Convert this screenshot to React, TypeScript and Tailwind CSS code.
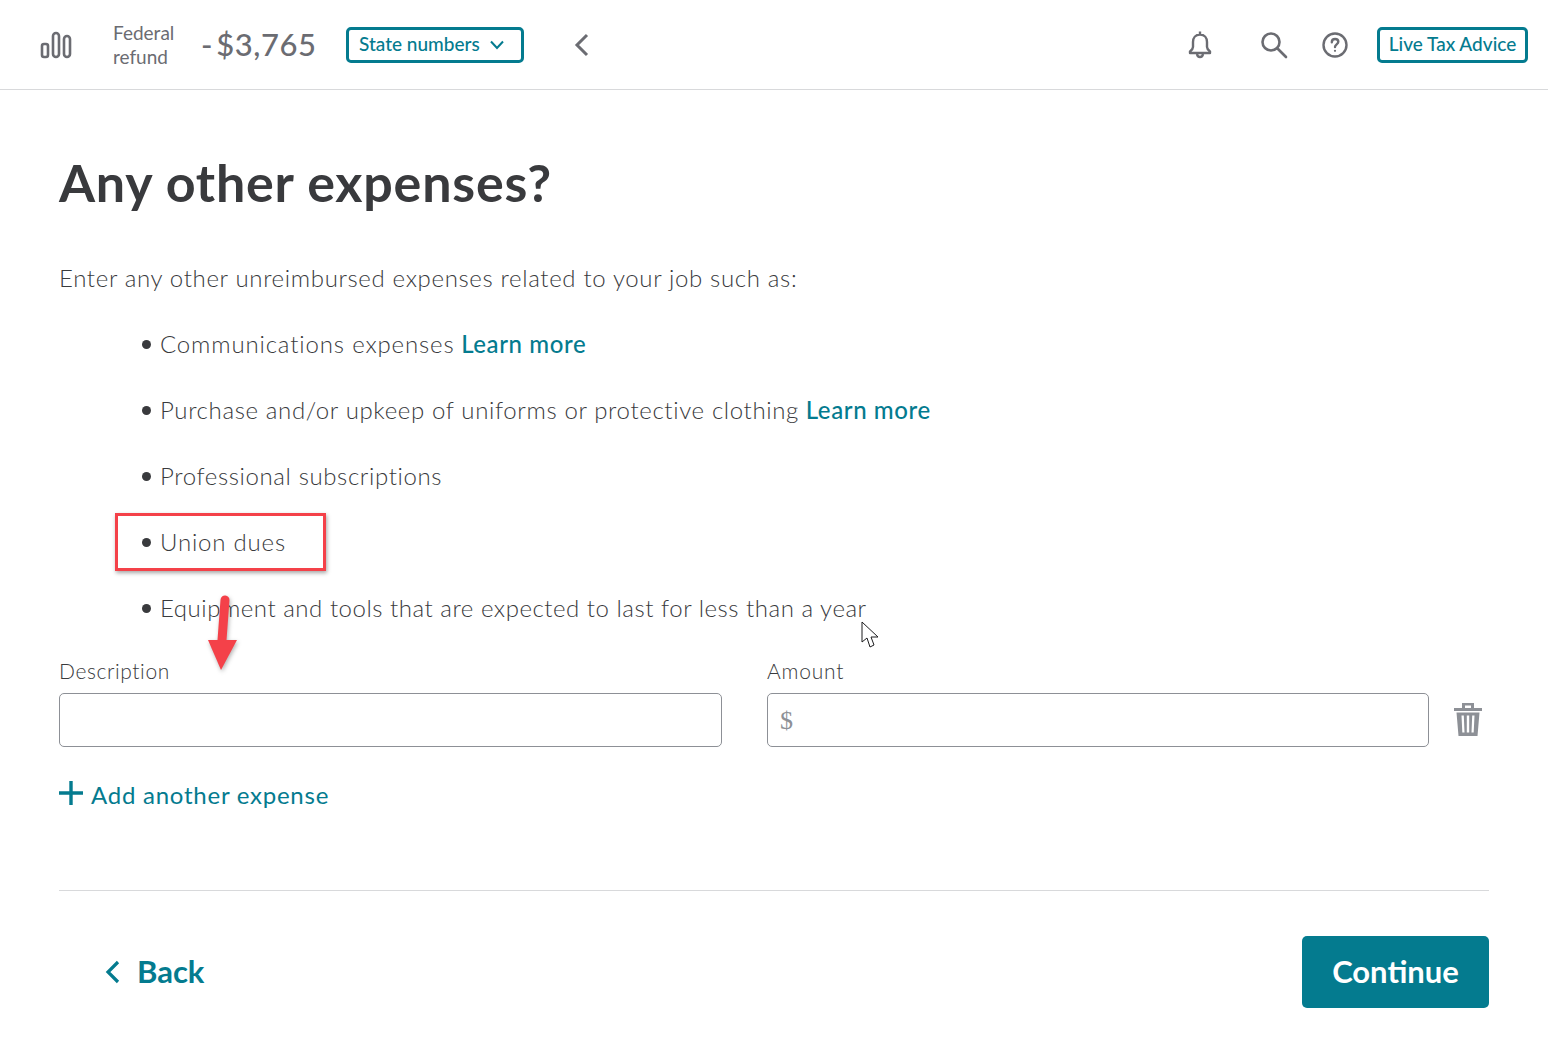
const font = { fontFamily: '"Lato", "Noto Sans", sans-serif' };

function Bullet({ children, tracking }: { children: React.ReactNode; tracking: string }) {
  return (
    <li className={`flex items-center h-[66px] text-[24px] font-light text-[#393a3d] ${tracking}`}>
      <span className="w-[9px] h-[9px] rounded-full bg-[#393a3d] mr-[9px] ml-[1px]" />
      <span>{children}</span>
    </li>
  );
}

function More() {
  return <span className="text-[#047b8f] font-medium tracking-[0.6px]"> Learn more</span>;
}

export default function App() {
  return (
    <div className="w-[1548px] h-[1045px] bg-white relative overflow-hidden" style={font}>
      <header className="h-[90px] border-b border-[#d8d9db] flex items-center">
        <svg width="32" height="28" viewBox="0 0 32 28" className="ml-[40px]" fill="none" stroke="#6b6c72" strokeWidth="2.6">
          <rect x="2" y="13" width="6" height="13" rx="2" />
          <rect x="13" y="2" width="6" height="24" rx="3" />
          <rect x="24" y="5" width="6" height="21" rx="3" />
        </svg>
        <div className="ml-[41px] w-[70px] text-[19px] leading-[24px] text-[#6b6c72]">
          <div>Federal</div>
          <div>refund</div>
        </div>
        <div className="ml-[18px] text-[31px] font-medium tracking-[0.5px] [word-spacing:-5px] text-[#6b6c72] w-[145px] whitespace-nowrap">- $3,765</div>
        <div className="w-[178px] h-[36px] border-[3px] border-[#047b8f] rounded-[5px] flex items-center pl-[10px] text-[19px] font-medium text-[#047b8f] whitespace-nowrap">
          State numbers
          <svg width="16" height="10" viewBox="0 0 16 10" className="ml-[9px]" fill="none" stroke="#047b8f" strokeWidth="2">
            <path d="M2 1.500 8 8l6-6.500" />
          </svg>
        </div>
        <svg width="16" height="24" viewBox="0 0 16 24" className="ml-[50px]" fill="none" stroke="#6b6c72" strokeWidth="3">
          <path d="M13 2 3 12l10 10" />
        </svg>
        <div className="flex-1" />
        <svg width="26" height="30" viewBox="0 0 26 30" className="mr-[47px]" fill="none" stroke="#6b6c72" strokeWidth="2.400" strokeLinejoin="round">
          <path d="M13 1.500v3M13 4.500c-4.500 0-7 3.300-7 7.500v5c0 2-1.600 3.300-3 4.500v1.500h20v-1.500c-1.400-1.200-3-2.500-3-4.500v-5c0-4.200-2.500-7.500-7-7.500Z" />
          <path d="M10 24c.3 2 1.400 3 3 3s2.700-1 3-3" />
        </svg>
        <svg width="28" height="28" viewBox="0 0 28 28" className="mr-[34px]" fill="none" stroke="#6b6c72" strokeWidth="2.600" strokeLinecap="round">
          <circle cx="11" cy="11" r="8.500" />
          <path d="m17.500 17.500 8.500 8.500" />
        </svg>
        <svg width="26" height="26" viewBox="0 0 26 26" className="mr-[29px]" fill="none" stroke="#6b6c72" strokeWidth="2.400">
          <circle cx="13" cy="13" r="11.500" />
          <path d="M9.800 10.200c0-2 1.400-3.200 3.300-3.200s3.200 1.100 3.200 2.800c0 2.600-3.300 2.600-3.300 5.200" strokeLinecap="round" />
          <circle cx="13" cy="18.800" r="1.100" fill="#6b6c72" stroke="none" />
        </svg>
        <div className="w-[151px] h-[36px] mr-[20px] border-[3px] border-[#047b8f] rounded-[5px] flex items-center justify-center text-[19px] font-medium text-[#047b8f] whitespace-nowrap">
          Live Tax Advice
        </div>
      </header>

      <main className="pl-[59px] pr-[59px]">
        <h1 className="mt-[58px] text-[52px] leading-[68px] font-bold text-[#393a3d] tracking-[0.8px]">Any other expenses?</h1>
        <p className="mt-[45px] text-[24px] leading-[34px] font-light tracking-[0.66px] text-[#393a3d]">
          Enter any other unreimbursed expenses related to your job such as:
        </p>
        <ul className="mt-[16px] pl-[82px]">
          <Bullet tracking="tracking-[0.85px]">Communications expenses<More /></Bullet>
          <Bullet tracking="tracking-[0.64px]">Purchase and/or upkeep of uniforms or protective clothing<More /></Bullet>
          <Bullet tracking="tracking-[0.62px]">Professional subscriptions</Bullet>
          <Bullet tracking="tracking-[0.8px]">Union dues</Bullet>
          <Bullet tracking="tracking-[0.53px]">Equipment and tools that are expected to last for less than a year</Bullet>
        </ul>

        <div className="flex mt-[17px]">
          <div className="w-[663px]">
            <label className="block text-[21px] leading-[26px] font-light tracking-[0.6px] text-[#393a3d]">Description</label>
            <div className="mt-[9px] h-[54px] border border-[#8d9096] rounded-[5px]" />
          </div>
          <div className="w-[662px] ml-[45px]">
            <label className="block text-[21px] leading-[26px] font-light tracking-[0.8px] text-[#393a3d]">Amount</label>
            <div className="mt-[9px] h-[54px] border border-[#8d9096] rounded-[5px] flex items-center pl-[12px] text-[26px] text-[#8d9096]" style={{ fontFamily: '"Liberation Serif", serif' }}>$</div>
          </div>
          <div className="flex items-center mt-[35px] ml-[25px] h-[54px]">
            <svg width="30" height="34" viewBox="0 0 30 34" fill="#8d9096" className="-ml-[1px] -mt-[1px]">
              <path fillRule="evenodd" d="M9 0h12v5h8v3H1V5h8V0Zm3 2.500V5h6V2.500h-6Z" />
              <path fillRule="evenodd" d="M3.500 9.500h23L24.500 33h-19L3.500 9.500Zm5 3 .8 17h2.200l-.7-17H8.500Zm5.300 0v17h2.400v-17h-2.400Zm5.400 0-.7 17h2.200l.8-17h-2.300Z" />
            </svg>
          </div>
        </div>

        <div className="flex items-center mt-[30px] text-[24px] text-[#047b8f] tracking-[0.75px]">
          <svg width="24" height="24" viewBox="0 0 24 24" stroke="#047b8f" strokeWidth="3.400" className="mr-[8px] -mt-[4px]">
            <path d="M12 0v24M0 12h24" />
          </svg>
          Add another expense
        </div>

        <div className="mt-[77px] border-t border-[#d8d9db]" />

        <div className="mt-[45px] flex items-center justify-between">
          <div className="flex items-center pl-[46px] text-[31px] font-bold text-[#047b8f]">
            <svg width="16" height="24" viewBox="0 0 16 24" fill="none" stroke="#047b8f" strokeWidth="3.200" className="mr-[16px]">
              <path d="M13 2 3 12l10 10" />
            </svg>
            <span className="-mt-[2px]">Back</span>
          </div>
          <div className="w-[187px] h-[72px] bg-[#047b8f] rounded-[5px] flex items-center justify-center pb-[2px] text-[31px] font-bold text-white">
            Continue
          </div>
        </div>
      </main>

      {/* annotations drawn over the page */}
      <div className="absolute left-[115px] top-[513px] w-[211px] h-[58px] border-[3px] border-[#f44149] shadow-[1px_2px_4px_rgba(0,0,0,0.35)]" />
      <svg className="absolute left-[200px] top-[590px]" width="50" height="90" viewBox="0 0 50 90" style={{ filter: 'drop-shadow(1px 2px 2px rgba(0,0,0,0.3))' }}>
        <path d="M25 10 22 50" stroke="#f44149" strokeWidth="9" strokeLinecap="round" fill="none" />
        <path d="M8 50h29L21 80Z" fill="#f44149" />
      </svg>
      <svg className="absolute left-[861px] top-[621px]" width="19" height="28" viewBox="0 0 19 28" fill="white" stroke="#1d1d1f" strokeWidth="1">
        <path d="M1 1v20l5-4 3 9 4-2-3-8h7L1 1Z" />
      </svg>
    </div>
  );
}
